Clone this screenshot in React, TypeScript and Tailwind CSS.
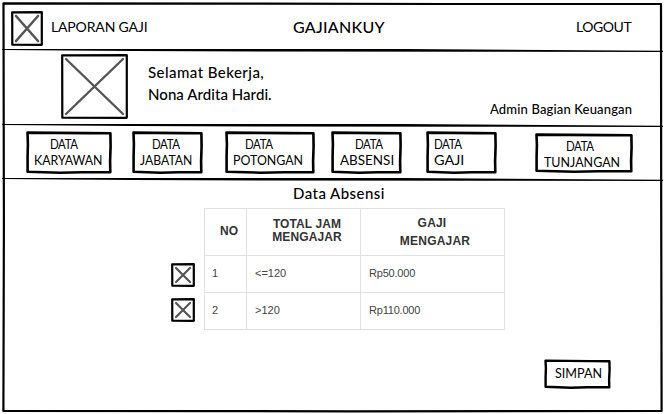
import React from "react";

const ink = "font-['Lato','Open_Sans',sans-serif] text-black whitespace-nowrap";

/** Slightly wobbly, pen-drawn rectangle that surrounds its parent. */
function SketchBorder({ w, h, stroke = 2.4 }: { w: number; h: number; stroke?: number }) {
  return (
    <svg className="pointer-events-none absolute inset-0" width={w} height={h} fill="none" stroke="#000" strokeLinecap="round" strokeLinejoin="round" strokeWidth={stroke}>
      <path d={`M1.5 1.6 L${w * 0.35} 1.9 L${w * 0.7} 2.1 L${w - 1.6} 2.3 L${w - 1.4} ${h * 0.35} L${w - 1.9} ${h * 0.7} L${w - 1.7} ${h - 1.7} L${w * 0.65} ${h - 1.7} L${w * 0.4} ${h - 1.3} L1.6 ${h - 2.2} L1.6 ${h * 0.6} L1.9 ${h * 0.3} Z`} />
    </svg>
  );
}

/** Crossed box standing in for an image or a checkbox. */
function Placeholder({ w, h, inset, cross, className = "" }: { w: number; h: number; inset: number; cross: number; className?: string }) {
  return (
    <svg className={`shrink-0 ${className}`} width={w} height={h} fill="none" strokeLinecap="round">
      <path d={`M1.2 1.3 L${w - 1.2} 1.1 V${h - 1.2} L1.3 ${h - 1.3} Z`} stroke="#000" strokeWidth="2.2" strokeLinejoin="round" />
      <path d={`M${inset} ${inset} L${w - inset} ${h - inset} M${w - inset} ${inset} L${inset} ${h - inset}`} stroke="#555" strokeWidth={cross} />
    </svg>
  );
}

function Rule() {
  return (
    <svg className="block h-[3px] w-[661px] shrink-0" viewBox="0 0 661 3">
      <path d="M0 .1 H400 L661 1.8 V2.9 L480 2.7 L260 2.4 L130 2 L0 1Z" fill="#000" />
    </svg>
  );
}

function NavButton({ w, h = 43, className, top, bottom }: { w: number; h?: number; className: string; top: React.ReactNode; bottom: React.ReactNode }) {
  return (
    <button className={`${ink} relative flex shrink-0 flex-col items-start text-left text-[14px] leading-4 ${className}`}>
      <SketchBorder w={w} h={h} stroke={2.6} />
      {top}
      {bottom}
    </button>
  );
}

const cell = "border border-[#e0e0e0]";
const data = "origin-left scale-x-[0.82] tracking-[-0.5px]";

export default function App() {
  return (
    <div className="h-[414px] w-[665px] overflow-hidden bg-white pl-[2px] pt-[2px]">
      <div className="relative flex h-[411px] w-[661px] flex-col">
        <svg className="pointer-events-none absolute inset-0" width="661" height="411" fill="none" stroke="#000" strokeLinejoin="round" strokeWidth="2.2">
          <path d="M1.5 1.4 L260 1.6 L440 2 L659 2 L659.2 200 L659.6 409 L350 409.3 L1.4 409 L1.9 220 Z" />
        </svg>

        <header className={`${ink} flex h-[47px] shrink-0 items-start`}>
          <Placeholder w={32} h={35} inset={5} cross={2.6} className="ml-[9px] mt-[9px]" />
          <span className="ml-[8px] mt-[16px] w-[242px] text-[14px] leading-[18px] tracking-[-0.15px]">LAPORAN GAJI</span>
          <h1 className="mt-[15px] w-[283px] text-[16px] font-medium leading-5 tracking-[0.25px]">GAJIANKUY</h1>
          <a className="mt-[16px] text-[14px] leading-[18px] tracking-[-0.45px]">LOGOUT</a>
        </header>
        <Rule />

        <section className={`${ink} flex h-[72px] shrink-0 items-start`}>
          <Placeholder w={67} h={65} inset={5} cross={2.4} className="ml-[59px] mt-[2px]" />
          <p className="ml-[20px] mt-[10px] w-[342px] text-[15px] font-medium leading-[21.5px]">
            <span className="block tracking-[0.45px]">Selamat Bekerja,</span>
            <span className="block tracking-[0.05px]">Nona Ardita Hardi.</span>
          </p>
          <p className="mt-[48px] text-[13px] font-medium leading-[18px] tracking-[0.15px]">Admin Bagian Keuangan</p>
        </section>
        <Rule />

        <nav className="flex h-[51px] shrink-0 items-start pl-[24px] pt-[4px]">
          <NavButton w={86} className="h-[43px] w-[86px] pt-[5px]" top={<span className={`ml-[24px] ${data}`}>DATA</span>} bottom={<span className="ml-[8px] origin-left scale-x-[0.88]">KARYAWAN</span>} />
          <NavButton w={71} className="ml-[20px] h-[43px] w-[71px] pt-[5px]" top={<span className={`ml-[20px] ${data}`}>DATA</span>} bottom={<span className="ml-[8px] origin-left scale-x-[0.87]">JABATAN</span>} />
          <NavButton w={90} className="ml-[22px] h-[43px] w-[90px] pt-[5px]" top={<span className={`ml-[20px] ${data}`}>DATA</span>} bottom={<span className="ml-[8px] origin-left scale-x-[0.885]">POTONGAN</span>} />
          <NavButton w={71} className="ml-[16px] h-[43px] w-[71px] pt-[5px]" top={<span className={`ml-[24px] ${data}`}>DATA</span>} bottom={<span className="ml-[9px] origin-left scale-x-[0.96]">ABSENSI</span>} />
          <NavButton w={71} className="ml-[24px] h-[43px] w-[71px] pt-[5px]" top={<span className={`ml-[8px] ${data}`}>DATA</span>} bottom={<span className="ml-[8px] origin-left scale-x-[1.03]">GAJI</span>} />
          <NavButton w={98} h={40} className="ml-[38px] mt-[2px] h-[40px] w-[98px] pt-[5px]" top={<span className={`ml-[31px] ${data}`}>DATA</span>} bottom={<span className="ml-[9px] origin-left scale-x-[0.89]">TUNJANGAN</span>} />
        </nav>
        <Rule />

        <main className="flex flex-1 flex-col">
          <h2 className={`${ink} ml-[291px] h-[27px] text-[15px] font-medium leading-[25px] tracking-[0.45px]`}>Data Absensi</h2>
          <div className="flex pl-[169px]">
            <div className="flex w-[33px] flex-col gap-[11px] pt-[55px]">
              <Placeholder w={24} h={24} inset={5} cross={2.2} />
              <Placeholder w={24} h={24} inset={5} cross={2.2} />
            </div>
            <table className="w-[300px] table-fixed border-collapse font-['Liberation_Sans',Arial,sans-serif] text-[11px] text-[#444]">
              <colgroup>
                <col className="w-[42px]" />
                <col className="w-[114px]" />
                <col className="w-[144px]" />
              </colgroup>
              <thead>
                <tr className="h-[47px] text-[12px] leading-[13px] text-[#333]">
                  <th className={`${cell} pb-[2px] pl-[7px]`}>NO</th>
                  <th className={`${cell} pb-[2px] pl-[7px] tracking-[0.1px]`}>TOTAL JAM<br />MENGAJAR</th>
                  <th className={`${cell} pb-[1px] pl-[5px] leading-[18px] tracking-[0.2px]`}><span className="pr-[6px]">GAJI</span><br />MENGAJAR</th>
                </tr>
              </thead>
              <tbody>
                <tr className="h-[37px]">
                  <td className={`${cell} pb-[2px] pl-[7px]`}>1</td>
                  <td className={`${cell} pb-[2px] pl-[8px]`}>&lt;=120</td>
                  <td className={`${cell} pb-[2px] pl-[8px] tracking-[-0.2px]`}>Rp50.000</td>
                </tr>
                <tr className="h-[37px]">
                  <td className={`${cell} pb-[2px] pl-[7px]`}>2</td>
                  <td className={`${cell} pb-[2px] pl-[8px]`}>&gt;120</td>
                  <td className={`${cell} pb-[2px] pl-[8px] tracking-[-0.2px]`}>Rp110.000</td>
                </tr>
              </tbody>
            </table>
          </div>
          <button className={`${ink} relative ml-[542px] mt-[29px] h-[31px] w-[67px] pb-[4px] pl-[11px] text-left text-[14px] leading-4`}>
            <SketchBorder w={67} h={30} />
            <span className="block origin-left scale-x-[0.9]">SIMPAN</span>
          </button>
        </main>
      </div>
    </div>
  );
}
